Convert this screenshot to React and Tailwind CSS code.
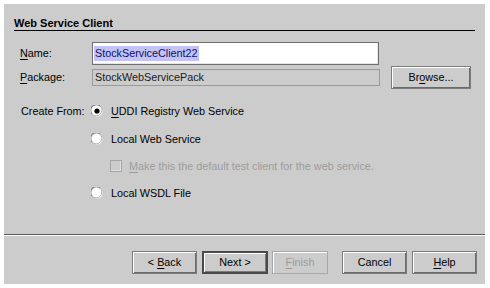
import React from 'react';

const Radio = ({ checked }) => (
  <svg width="12" height="12" viewBox="0 0 12 12" className="shrink-0">
    <circle cx="6" cy="6" r="5.5" fill="#ffffff" />
    <path d="M1.2 9.2 A5.5 5.5 0 0 1 9.2 1.2" fill="none" stroke="#6e6e6e" strokeWidth="1" />
    <path d="M9.2 1.2 A5.5 5.5 0 0 1 1.2 9.2" fill="none" stroke="#b4b4b4" strokeWidth="1" />
    {checked && <circle cx="6" cy="6" r="2.6" fill="#000000" />}
  </svg>
);

const Button = ({ children, width, isDefault, disabled }) => {
  let cls = 'h-[23px] flex items-center justify-center shrink-0 whitespace-pre ';
  if (isDefault) {
    cls += 'border-2 border-[#4a4a4a] shadow-[inset_1px_1px_0_#ffffff,inset_-1px_-1px_0_#7a7a7a] text-black';
  } else if (disabled) {
    cls += 'border border-[#a8a8a8] shadow-[inset_1px_1px_0_#ffffff] text-[#9c9c9c]';
  } else {
    cls += 'border border-[#7c7c7c] shadow-[inset_1px_1px_0_#ffffff,inset_-1px_-1px_0_#6a6a6a] text-black';
  }
  return (
    <div className={cls} style={{ width }}>
      {children}
    </div>
  );
};

const U = ({ children }) => <span className="underline underline-offset-2">{children}</span>;

export default function App() {
  return (
    <div className="w-[490px] h-[288px] bg-white p-[4px]">
      <div className="w-[481px] h-[280px] bg-[#cccccc] flex flex-col font-['Liberation_Sans',Arial,sans-serif] text-[10.8px] text-black">
        <div className="ml-[10px] mr-[10px] mt-[12px] h-[15px] border-b border-black font-bold text-[11px] leading-[14px]">
          Web Service Client
        </div>

        <div className="mt-[11px] flex items-center pl-[16px]">
          <div className="w-[72px]"><U>N</U>ame:</div>
          <div className="w-[287px] h-[23px] bg-white border border-[#6e6e6e] shadow-[inset_-1px_-1px_0_#e6e6e6] flex items-center pl-[1px]">
            <span className="bg-[#c2c2f4] text-[#10106e] px-[1px] leading-[15px]">StockServiceClient22</span>
          </div>
        </div>

        <div className="mt-[1px] flex items-center pl-[16px] h-[23px]">
          <div className="w-[72px]"><U>P</U>ackage:</div>
          <div className="w-[288px] h-[17px] border border-[#9a9a9a] flex items-center pl-[2px] text-[#1a1a1a]">
            StockWebServicePack
          </div>
          <div className="ml-[11px]">
            <Button width={80}>Br<U>o</U>wse...</Button>
          </div>
        </div>

        <div className="mt-[13px] flex pl-[17px]">
          <div className="w-[70px] h-[18px] flex items-center">Create From:</div>
          <div className="flex flex-col">
            <div className="h-[18px] flex items-center gap-[8px]">
              <Radio checked />
              <span><U>U</U>DDI Registry Web Service</span>
            </div>
            <div className="mt-[10px] h-[18px] flex items-center gap-[8px]">
              <Radio />
              <span>Local Web Service</span>
            </div>
            <div className="mt-[9px] h-[18px] flex items-center gap-[7px] pl-[19px] text-[#9c9c9c]">
              <div className="w-[12px] h-[12px] border border-[#a4a4a4] shadow-[inset_-1px_-1px_0_#e2e2e2]" />
              <span><U>M</U>ake this the default test client for the web service.</span>
            </div>
            <div className="mt-[9px] h-[18px] flex items-center gap-[8px]">
              <Radio />
              <span>Local WSDL File</span>
            </div>
          </div>
        </div>

        <div className="mt-auto border-t border-[#5c5c5c] border-b border-b-white" />

        <div className="mt-[15px] mb-[10px] pr-[8px] flex justify-end items-center">
          <Button width={65}>{'< '}<U>B</U>ack</Button>
          <div className="ml-[5px]"><Button width={66} isDefault>{'Next >'}</Button></div>
          <div className="ml-[4px]"><Button width={56} disabled><U>F</U>inish</Button></div>
          <div className="ml-[14px]"><Button width={65}>Cancel</Button></div>
          <div className="ml-[5px]"><Button width={65}><U>H</U>elp</Button></div>
        </div>
      </div>
    </div>
  );
}
